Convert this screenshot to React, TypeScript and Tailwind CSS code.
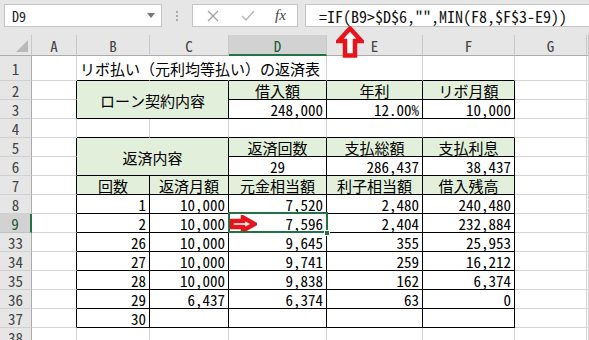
import React from 'react'

type Align = 'l' | 'c' | 'r'
type CellData = { t: string; a?: Align; g?: boolean; span?: boolean }

const COLS = ['A', 'B', 'C', 'D', 'E', 'F', 'G', 'H']
const ROWS = [1, 2, 3, 4, 5, 6, 7, 8, 9, 33, 34, 35, 36, 37, 38]
const TABLE_ROWS = [2, 3, 5, 6, 7, 8, 9, 33, 34, 35, 36, 37]
const COVERED = ['C2', 'B3', 'C3', 'C5', 'B6', 'C6']

const cells: Record<string, CellData> = {
  B1: { t: 'リボ払い（元利均等払い）の返済表', a: 'l' },
  B2: { t: 'ローン契約内容', a: 'c', g: true, span: true },
  D2: { t: '借入額', a: 'c', g: true },
  E2: { t: '年利', a: 'c', g: true },
  F2: { t: 'リボ月額', a: 'c', g: true },
  D3: { t: '248,000', a: 'r' },
  E3: { t: '12.00%', a: 'r' },
  F3: { t: '10,000', a: 'r' },
  B5: { t: '返済内容', a: 'c', g: true, span: true },
  D5: { t: '返済回数', a: 'c', g: true },
  E5: { t: '支払総額', a: 'c', g: true },
  F5: { t: '支払利息', a: 'c', g: true },
  D6: { t: '29', a: 'c' },
  E6: { t: '286,437', a: 'r' },
  F6: { t: '38,437', a: 'r' },
  B7: { t: '回数', a: 'c', g: true },
  C7: { t: '返済月額', a: 'c', g: true },
  D7: { t: '元金相当額', a: 'c', g: true },
  E7: { t: '利子相当額', a: 'c', g: true },
  F7: { t: '借入残高', a: 'c', g: true },
}

const schedule: [number, string, string, string, string, string][] = [
  [8, '1', '10,000', '7,520', '2,480', '240,480'],
  [9, '2', '10,000', '7,596', '2,404', '232,884'],
  [33, '26', '10,000', '9,645', '355', '25,953'],
  [34, '27', '10,000', '9,741', '259', '16,212'],
  [35, '28', '10,000', '9,838', '162', '6,374'],
  [36, '29', '6,437', '6,374', '63', '0'],
  [37, '30', '', '', '', ''],
]
schedule.forEach(([r, ...vals]) => {
  ;['B', 'C', 'D', 'E', 'F'].forEach((c, i) => {
    cells[`${c}${r}`] = { t: vals[i], a: 'r' }
  })
})

function inTable(col: string, row: number) {
  return ['B', 'C', 'D', 'E', 'F'].includes(col) && TABLE_ROWS.includes(row)
}

function nextCol(col: string) {
  return COLS[COLS.indexOf(col) + 1] ?? ''
}

function nextRow(row: number) {
  return ROWS[ROWS.indexOf(row) + 1] ?? 0
}

function UpArrow() {
  return (
    <svg width="28" height="32" viewBox="0 0 28 32" className="absolute left-[336px] top-[26px] z-30">
      <path d="M14 2.5 L25.5 15 L19 15 L19 29.5 L9 29.5 L9 15 L2.5 15 Z" fill="#fff" stroke="#e8141b" strokeWidth="4.5" strokeLinejoin="miter" />
    </svg>
  )
}

function RightArrow() {
  return (
    <svg width="28" height="18" viewBox="0 0 28 18" className="absolute left-[0px] top-[1px]">
      <path d="M2.5 6 L14 6 L14 2.5 L25.5 9 L14 15.5 L14 12 L2.5 12 Z" fill="#fff" stroke="#e8141b" strokeWidth="4.5" />
    </svg>
  )
}

function Cell({ col, row }: { col: string; row: number }) {
  const key = `${col}${row}`
  const d = cells[key]
  const rightBlack = inTable(col, row) || inTable(nextCol(col), row)
  const bottomBlack = inTable(col, row) || inTable(col, nextRow(row))
  const hideRight = key === 'B1' || key === 'C1'
  const selected = key === 'D9'

  const rb = rightBlack ? 'border-r-black' : hideRight ? 'border-r-white' : 'border-r-[#d4d4d4]'
  const bb = bottomBlack ? 'border-b-black' : 'border-b-[#d4d4d4]'
  const bg = d?.g ? 'bg-[#e2efda]' : 'bg-white'
  const align =
    d?.a === 'r' ? 'justify-end pr-[3px]' : d?.a === 'l' ? 'justify-start pl-[3px]' : 'justify-center'
  const span = d?.span ? 'col-span-2 row-span-2' : ''
  const z = key === 'B1' || selected ? 'relative z-10' : 'relative'

  return (
    <div className={`flex items-center whitespace-nowrap border-r border-b pt-[1px] ${rb} ${bb} ${bg} ${align} ${span} ${z}`}>
      {d?.t}
      {selected && (
        <>
          <RightArrow />
          <div className="absolute -left-px -top-[2px] -right-[2px] -bottom-px border-2 border-[#217346]" />
          <div className="absolute -right-[4px] -bottom-[4px] h-[6px] w-[6px] border border-white bg-[#217346]" />
        </>
      )}
    </div>
  )
}

export default function App() {
  return (
    <div className="relative h-[340px] w-[589px] overflow-hidden bg-white font-['Noto_Sans_Mono_CJK_JP','Noto_Sans_CJK_JP',monospace] text-[15px] font-light leading-none text-black">
      {/* formula bar */}
      <div className="flex h-[35px] items-start gap-0 bg-[#e6e6e6] pl-[4px] pt-[4px]">
        <div className="flex h-[23px] w-[158px] items-center justify-between border border-[#c6c6c6] bg-white pl-[7px] pr-[6px] text-[14px] text-[#222]">
          <span>D9</span>
          <svg width="8" height="5" viewBox="0 0 8 5">
            <path d="M0 0 L8 0 L4 5 Z" fill="#777" />
          </svg>
        </div>
        <div className="flex h-[23px] w-[30px] flex-col items-center justify-center gap-[2px]">
          <span className="h-[2px] w-[2px] bg-[#a8a8a8]" />
          <span className="h-[2px] w-[2px] bg-[#a8a8a8]" />
          <span className="h-[2px] w-[2px] bg-[#a8a8a8]" />
        </div>
        <div className="flex h-[23px] w-[106px] items-center border border-[#c6c6c6] bg-white">
          <svg width="14" height="14" viewBox="0 0 14 14" className="ml-[13px]">
            <path d="M2 2 L12 12 M12 2 L2 12" stroke="#a0a0a0" strokeWidth="1.3" />
          </svg>
          <svg width="16" height="14" viewBox="0 0 16 14" className="ml-[20px]">
            <path d="M2 7 L6 11 L14 2" stroke="#b4b4b4" strokeWidth="1.4" fill="none" />
          </svg>
          <span className="ml-[19px] font-['Liberation_Serif',serif] text-[15px] italic text-[#444]">fx</span>
        </div>
        <div className="ml-[7px] flex h-[23px] flex-1 items-center border border-r-0 border-[#c6c6c6] bg-white pl-[13px] pt-[1px] text-[16px] text-[#111]">
          =IF(B9&gt;$D$6,"",MIN(F8,$F$3-E9))
        </div>
      </div>

      {/* sheet */}
      <div className="grid grid-cols-[32px_45px_73px_79px_98px_96px_92px_72px_1fr] grid-rows-[21px_25px_repeat(14,19px)]">
        <div className="relative border-r border-b border-r-[#c8c8c8] border-b-[#ababab] bg-[#e6e6e6]">
          <svg width="12" height="12" viewBox="0 0 12 12" className="absolute right-[3px] bottom-[3px]">
            <path d="M12 0 L12 12 L0 12 Z" fill="#b9b9b9" />
          </svg>
        </div>
        {COLS.map((c) =>
          c === 'D' ? (
            <div key={c} className="flex items-center justify-center border-r border-b-2 border-r-[#c8c8c8] border-b-[#217346] bg-[#d2d2d2] pt-[2px] text-[#1f5a37]">
              {c}
            </div>
          ) : (
            <div key={c} className="flex items-center justify-center border-r border-b border-r-[#c8c8c8] border-b-[#ababab] bg-[#e6e6e6] pt-[1px] text-[#444]">
              {c === 'H' ? '' : c}
            </div>
          )
        )}
        {ROWS.map((r) => (
          <React.Fragment key={r}>
            {r === 9 ? (
              <div className="flex items-center justify-center border-r-2 border-b border-r-[#217346] border-b-[#c0c0c0] bg-[#d2d2d2] pt-[1px] text-[#1f5a37]">
                {r}
              </div>
            ) : (
              <div className="flex items-center justify-center border-r border-b border-r-[#ababab] border-b-[#d0d0d0] bg-[#e6e6e6] pt-[1px] text-[#444]">
                {r}
              </div>
            )}
            {COLS.filter((c) => !COVERED.includes(`${c}${r}`)).map((c) => (
              <Cell key={c} col={c} row={r} />
            ))}
          </React.Fragment>
        ))}
      </div>

      <UpArrow />
    </div>
  )
}
